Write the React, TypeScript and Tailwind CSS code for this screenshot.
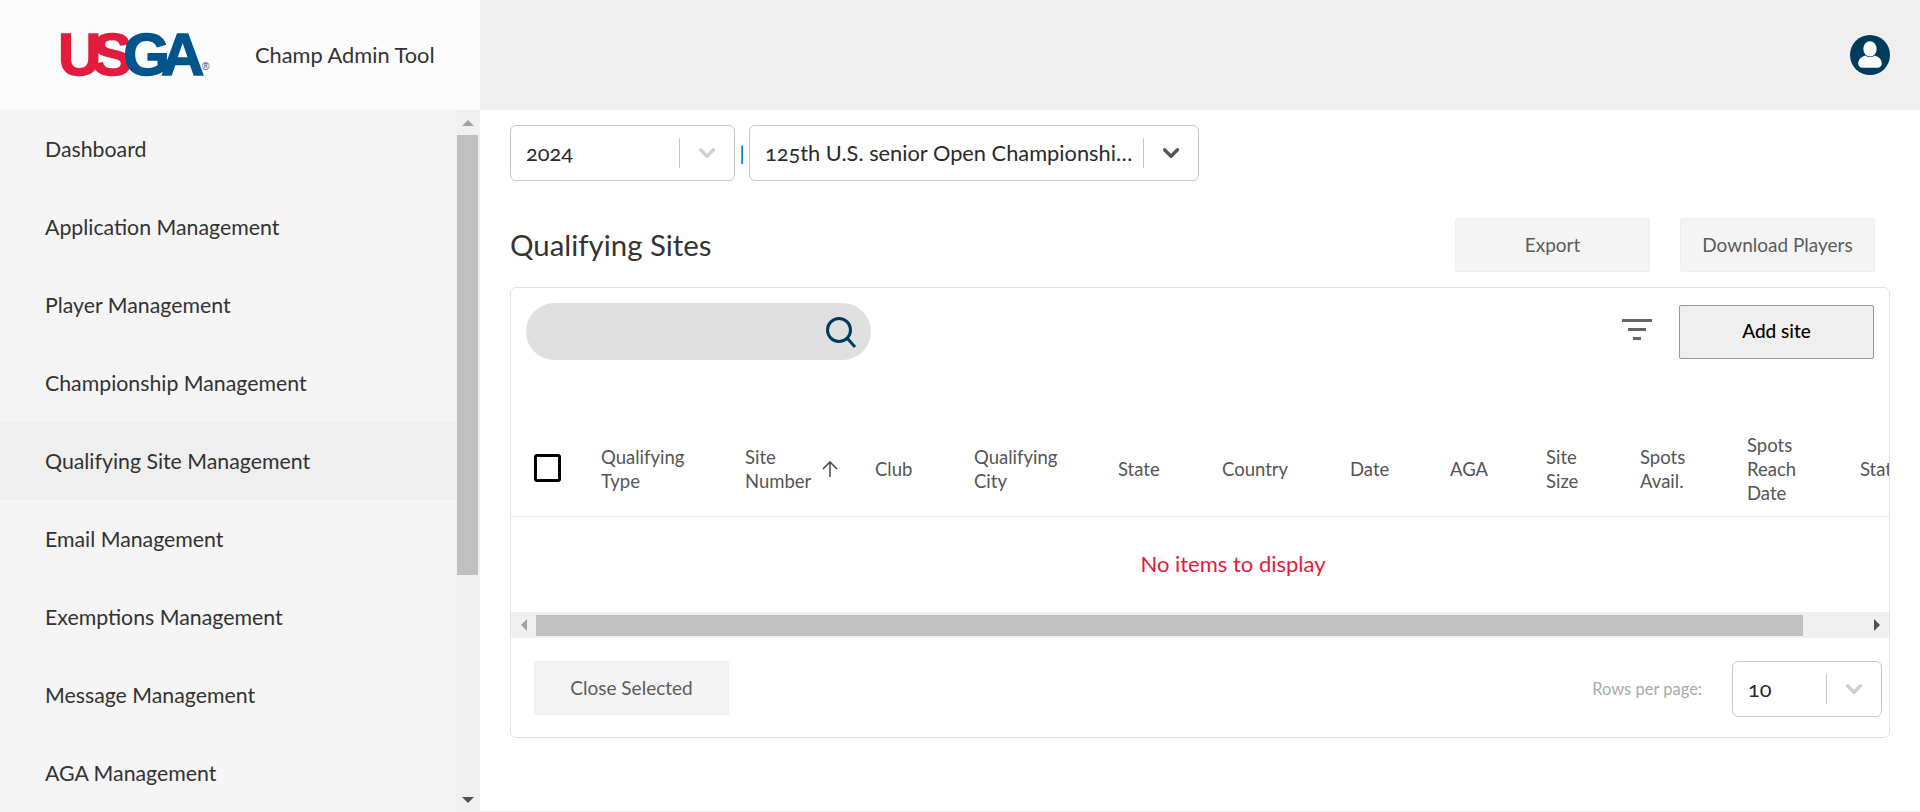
import { ChevronDown } from "lucide-react";

const navItems = [
  "Dashboard",
  "Application Management",
  "Player Management",
  "Championship Management",
  "Qualifying Site Management",
  "Email Management",
  "Exemptions Management",
  "Message Management",
  "AGA Management",
];

const columns: { lines: string[]; width: string }[] = [
  { lines: ["Qualifying", "Type"], width: "w-[144px]" },
  { lines: ["Site", "Number"], width: "w-[130px]" },
  { lines: ["Club"], width: "w-[99px]" },
  { lines: ["Qualifying", "City"], width: "w-[144px]" },
  { lines: ["State"], width: "w-[104px]" },
  { lines: ["Country"], width: "w-[128px]" },
  { lines: ["Date"], width: "w-[100px]" },
  { lines: ["AGA"], width: "w-[96px]" },
  { lines: ["Site", "Size"], width: "w-[94px]" },
  { lines: ["Spots", "Avail."], width: "w-[107px]" },
  { lines: ["Spots", "Reach", "Date"], width: "w-[113px]" },
  { lines: ["Status"], width: "w-[120px]" },
];

const Select = ({ value, className, chevron }: { value: string; className: string; chevron: string }) => (
  <div className={`flex items-center rounded-[6px] border border-[#c8c8c8] bg-white ${className}`}>
    <span className="min-w-0 flex-1 truncate pl-[15px] pr-2 text-[21.8px] text-[#2b2b2b] [font-variant-numeric:oldstyle-nums]">{value}</span>
    <span className="h-[30px] w-px shrink-0 bg-[#c8c8c8]" />
    <span className="flex w-[54px] shrink-0 justify-center">
      <ChevronDown className={`h-[26px] w-[26px] ${chevron}`} strokeWidth={3} />
    </span>
  </div>
);

const GreyButton = ({ label, className }: { label: string; className: string }) => (
  <button type="button" className={`h-[54px] w-[195px] rounded-[2px] border border-[#eeeeee] bg-[#f4f4f4] text-[19px] text-[#5c5c5c] ${className}`}>
    {label}
  </button>
);

export default function App() {
  return (
    <div className="flex h-[812px] w-[1920px] flex-col overflow-hidden bg-white font-['Lato',sans-serif] text-[#333]">
      <header className="flex h-[110px] shrink-0">
        <div className="flex w-[480px] items-center bg-[#fcfcfc]">
          <div className="relative ml-[58px] flex w-[197px] items-center font-['Liberation_Sans',sans-serif] text-[60px] font-bold leading-none tracking-[-9px] [-webkit-text-stroke:1.5px]">
            <span className="text-[#e31b3c]">US</span>
            <span className="text-[#00558c]">GA</span>
            <span className="absolute left-[144px] top-[37px] text-[10px] font-normal tracking-normal text-[#00558c] [-webkit-text-stroke:0px]">®</span>
          </div>
          <span className="text-[21.8px] text-[#333]">Champ Admin Tool</span>
        </div>
        <div className="flex flex-1 items-center justify-end bg-[#efefef] pr-[30px]">
          <svg width="40" height="40" viewBox="0 0 39 39">
            <circle cx="19.5" cy="19.5" r="19.5" fill="#003b5c" />
            <ellipse cx="19.5" cy="13.5" rx="6.5" ry="7.5" fill="#fff" />
            <path d="M8 28c0-5 4-7 7-8 2.5 2 6.5 2 9 0 3 1 7 3 7 8 0 2-2 4-4 4H12c-2 0-4-2-4-4z" fill="#fff" />
          </svg>
        </div>
      </header>

      <div className="flex min-h-0 flex-1">
        <aside className="flex w-[480px] shrink-0 bg-[#f5f5f5]">
          <nav className="min-w-0 flex-1">
            {navItems.map((item) => (
              <div
                key={item}
                className={`flex h-[78px] items-center pl-[45px] pt-[2px] text-[21.3px] text-[#333] ${item === "Qualifying Site Management" ? "bg-[#efefef]" : ""}`}
              >
                {item}
              </div>
            ))}
          </nav>
          <div className="flex w-[24px] shrink-0 flex-col bg-[#f0f0f0]">
            <div className="flex h-[25px] items-center justify-center">
              <span className="h-0 w-0 border-x-[6px] border-b-[6px] border-x-transparent border-b-[#a3a3a3]" />
            </div>
            <div className="ml-px h-[440px] w-[21px] bg-[#c0c0c0]" />
            <div className="flex flex-1 items-end justify-center pb-[9px]">
              <span className="h-0 w-0 border-x-[6px] border-t-[6px] border-x-transparent border-t-[#505050]" />
            </div>
          </div>
        </aside>

        <main className="min-w-0 flex-1 border-b border-[#eeeeee] px-[30px] pt-[15px]">
          <div className="flex items-center">
            <Select value="2024" className="h-[56px] w-[225px]" chevron="text-[#cfcfcf]" />
            <span className="w-[14px] text-center text-[20px] text-[#00558c]">|</span>
            <Select value="125th U.S. senior Open Championship 2024" className="h-[56px] w-[450px]" chevron="text-[#555]" />
          </div>

          <div className="mt-[37px] flex items-center pr-[15px]">
            <h1 className="flex-1 text-[29.4px] font-normal text-[#333]">Qualifying Sites</h1>
            <GreyButton label="Export" className="mr-[30px]" />
            <GreyButton label="Download Players" className="" />
          </div>

          <section className="mt-[15px] overflow-hidden rounded-[6px] border border-[#e3e3e3]">
            <div className="flex h-[132px] items-start justify-between pl-[15px] pr-[15px] pt-[15px]">
              <div className="flex h-[57px] w-[345px] items-center justify-end rounded-full bg-[#e0e0e0] pr-[14px]">
                <svg width="32" height="32" viewBox="0 0 32 32" fill="none" stroke="#003b5c" strokeWidth="3">
                  <circle cx="14" cy="14" r="11.5" />
                  <path d="M22 22l8 9" />
                </svg>
              </div>
              <div className="mt-[2px] flex items-center">
                <svg width="30" height="22" viewBox="0 0 30 22" className="mb-[4px] mr-[27px]" fill="#666">
                  <rect x="0" y="0" width="30" height="3" />
                  <rect x="6" y="9" width="18" height="3" />
                  <rect x="11" y="18" width="8" height="3" />
                </svg>
                <button type="button" className="h-[54px] w-[195px] rounded-[2px] border border-[#999] bg-[#efefef] pb-[2px] text-[19px] font-medium text-black">
                  Add site
                </button>
              </div>
            </div>

            <div className="flex h-[97px] items-center overflow-hidden border-b border-[#eeeeee] text-[18.5px] leading-[24px] text-[#555]">
              <div className="w-[90px] shrink-0 pl-[23px]">
                <div className="h-[28px] w-[27px] rounded-[3px] border-[3px] border-black" />
              </div>
              {columns.map((col) => (
                <div key={col.lines.join(" ")} className={`flex shrink-0 items-center pt-[2px] ${col.width}`}>
                  <div>
                    {col.lines.map((line) => (
                      <div key={line}>{line}</div>
                    ))}
                  </div>
                  {col.lines[1] === "Number" && (
                    <svg width="18" height="16" viewBox="0 0 18 16" className="ml-[10px]" fill="none" stroke="#444" strokeWidth="1.5">
                      <path d="M9 16V1M2 8l7-7 7 7" />
                    </svg>
                  )}
                </div>
              ))}
            </div>

            <div className="flex h-[95px] items-center justify-center pb-[2px] pl-[66px] text-[22px] text-[#e31b3c]">No items to display</div>

            <div className="flex h-[26px] items-center bg-[#f0f0f0]">
              <div className="flex w-[25px] shrink-0 justify-center">
                <span className="h-0 w-0 border-y-[6px] border-r-[6px] border-y-transparent border-r-[#a3a3a3]" />
              </div>
              <div className="h-[21px] w-[1267px] bg-[#c0c0c0]" />
              <div className="flex flex-1 justify-end pr-[9px]">
                <span className="h-0 w-0 border-y-[6px] border-l-[6px] border-y-transparent border-l-[#505050]" />
              </div>
            </div>

            <div className="flex h-[99px] items-start justify-between pl-[23px] pr-[7px] pt-[23px]">
              <GreyButton label="Close Selected" className="" />
              <div className="flex items-center">
                <span className="mr-[30px] text-[16.5px] text-[#aaaaaa]">Rows per page:</span>
                <Select value="10" className="h-[56px] w-[150px]" chevron="text-[#cfcfcf]" />
              </div>
            </div>
          </section>
        </main>
      </div>
    </div>
  );
}
